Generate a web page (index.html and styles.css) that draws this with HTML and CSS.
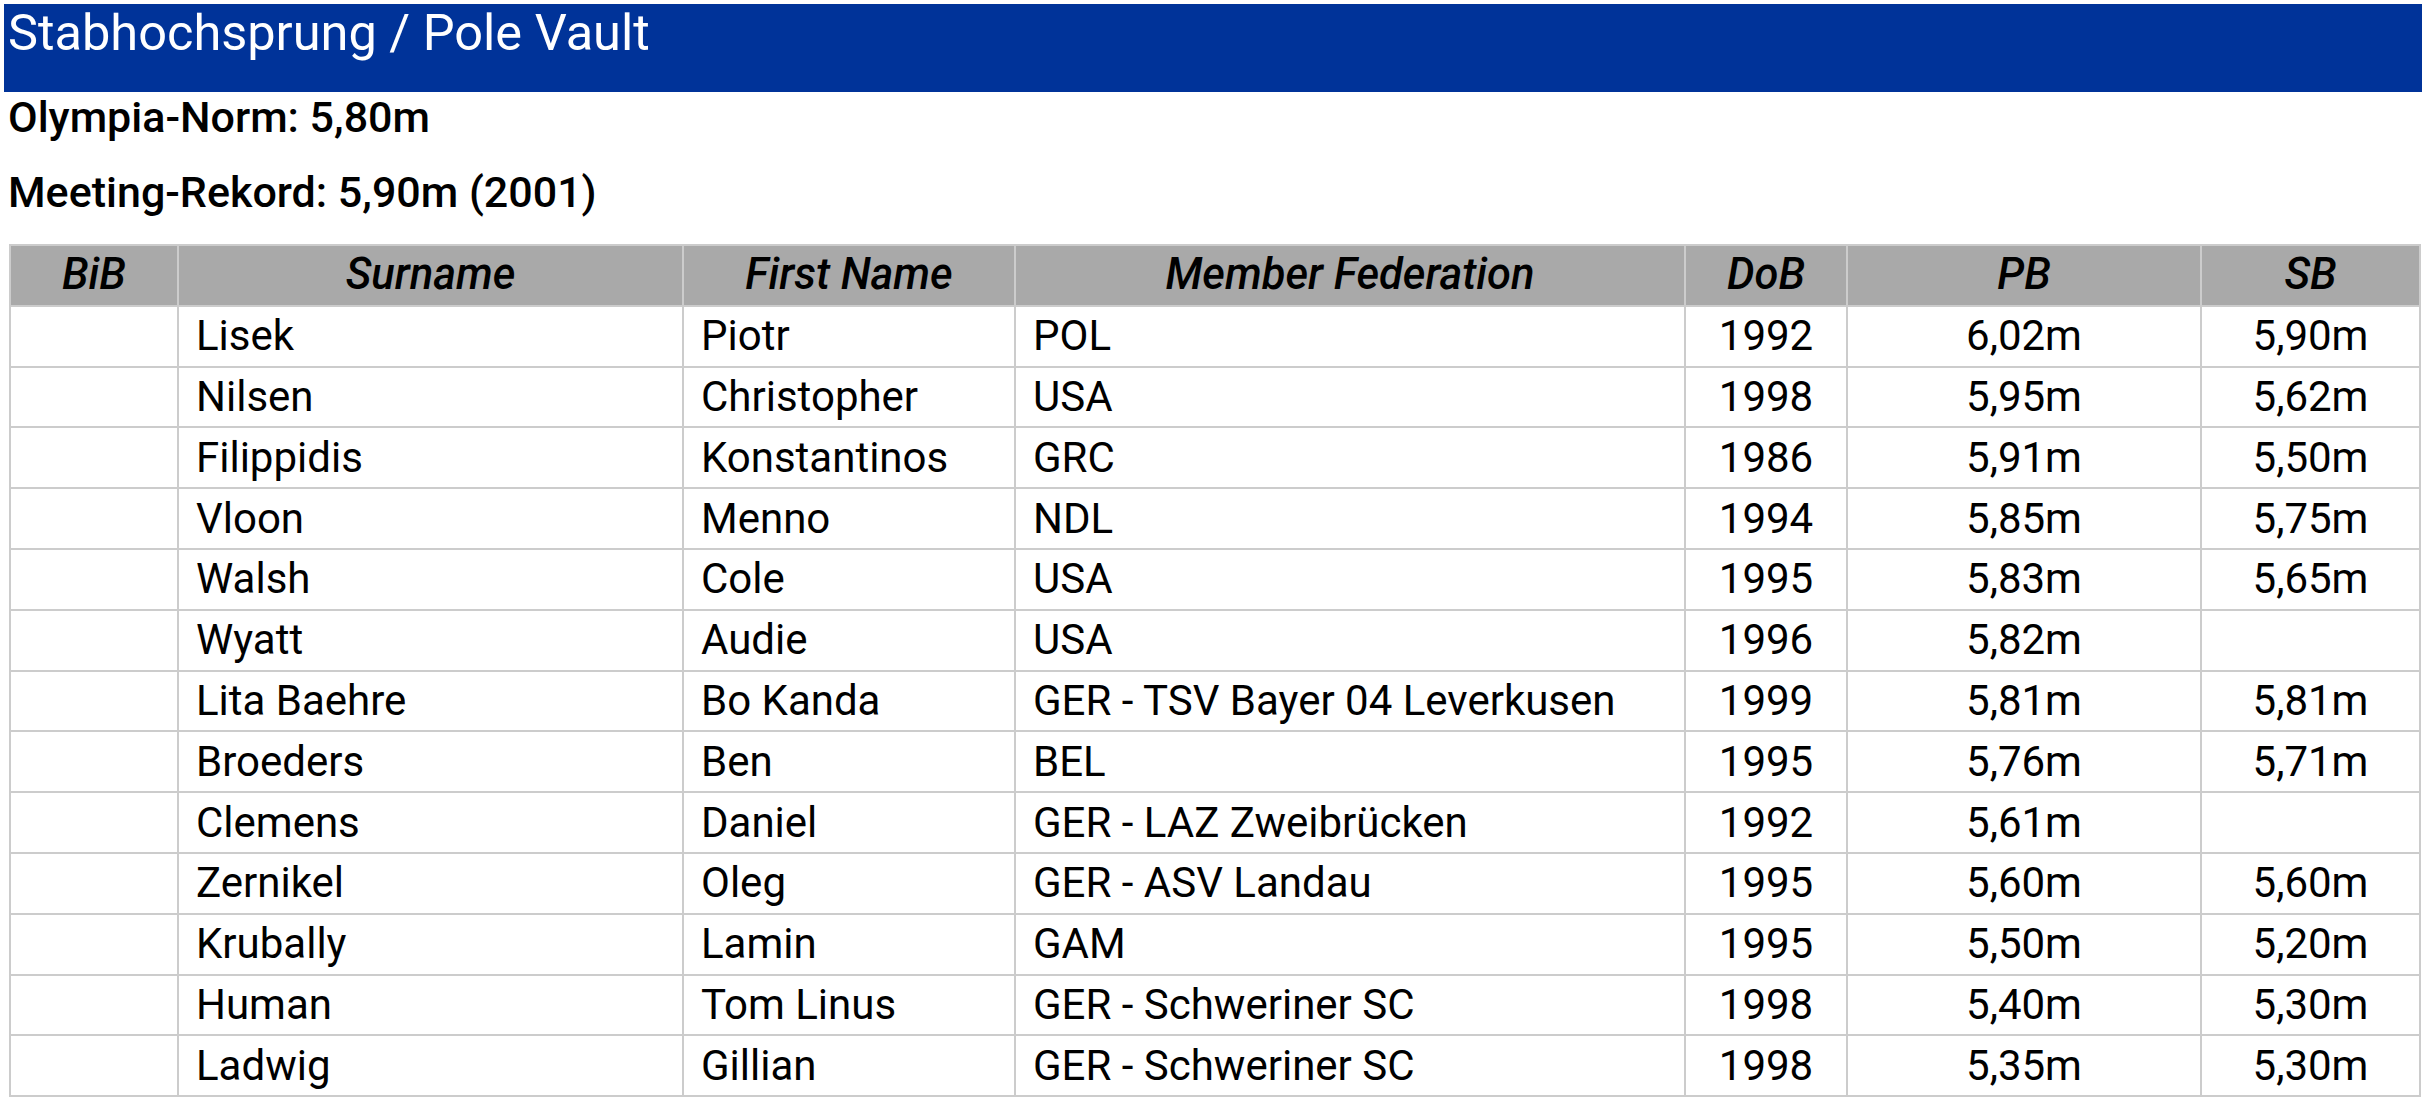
FILE: index.html
```html
<!DOCTYPE html>
<html lang="de">
<head>
<meta charset="utf-8">
<title>Stabhochsprung / Pole Vault</title>
<link rel="stylesheet" href="styles.css">
</head>
<body>
<div class="page">
  <h1 class="event-title">Stabhochsprung / Pole Vault</h1>
  <p class="info info-first">Olympia-Norm: 5,80m</p>
  <p class="info">Meeting-Rekord: 5,90m (2001)</p>
  <table class="entries">
    <colgroup>
      <col class="c-bib"><col class="c-sur"><col class="c-first"><col class="c-fed"><col class="c-dob"><col class="c-pb"><col class="c-sb">
    </colgroup>
    <thead>
      <tr><th>BiB</th><th>Surname</th><th>First Name</th><th>Member Federation</th><th>DoB</th><th>PB</th><th>SB</th></tr>
    </thead>
    <tbody>
      <tr><td></td><td>Lisek</td><td>Piotr</td><td>POL</td><td class="num">1992</td><td class="num">6,02m</td><td class="num">5,90m</td></tr>
      <tr><td></td><td>Nilsen</td><td>Christopher</td><td>USA</td><td class="num">1998</td><td class="num">5,95m</td><td class="num">5,62m</td></tr>
      <tr><td></td><td>Filippidis</td><td>Konstantinos</td><td>GRC</td><td class="num">1986</td><td class="num">5,91m</td><td class="num">5,50m</td></tr>
      <tr><td></td><td>Vloon</td><td>Menno</td><td>NDL</td><td class="num">1994</td><td class="num">5,85m</td><td class="num">5,75m</td></tr>
      <tr><td></td><td>Walsh</td><td>Cole</td><td>USA</td><td class="num">1995</td><td class="num">5,83m</td><td class="num">5,65m</td></tr>
      <tr><td></td><td>Wyatt</td><td>Audie</td><td>USA</td><td class="num">1996</td><td class="num">5,82m</td><td class="num"></td></tr>
      <tr><td></td><td>Lita Baehre</td><td>Bo Kanda</td><td>GER - TSV Bayer 04 Leverkusen</td><td class="num">1999</td><td class="num">5,81m</td><td class="num">5,81m</td></tr>
      <tr><td></td><td>Broeders</td><td>Ben</td><td>BEL</td><td class="num">1995</td><td class="num">5,76m</td><td class="num">5,71m</td></tr>
      <tr><td></td><td>Clemens</td><td>Daniel</td><td>GER - LAZ Zweibrücken</td><td class="num">1992</td><td class="num">5,61m</td><td class="num"></td></tr>
      <tr><td></td><td>Zernikel</td><td>Oleg</td><td>GER - ASV Landau</td><td class="num">1995</td><td class="num">5,60m</td><td class="num">5,60m</td></tr>
      <tr><td></td><td>Krubally</td><td>Lamin</td><td>GAM</td><td class="num">1995</td><td class="num">5,50m</td><td class="num">5,20m</td></tr>
      <tr><td></td><td>Human</td><td>Tom Linus</td><td>GER - Schweriner SC</td><td class="num">1998</td><td class="num">5,40m</td><td class="num">5,30m</td></tr>
      <tr><td></td><td>Ladwig</td><td>Gillian</td><td>GER - Schweriner SC</td><td class="num">1998</td><td class="num">5,35m</td><td class="num">5,30m</td></tr>
    </tbody>
  </table>
</div>
</body>
</html>
```
FILE: styles.css
```css
html, body {
  margin: 0;
  padding: 0;
  background: #ffffff;
}

body {
  font-family: Roboto, "Liberation Sans", Arial, sans-serif;
  color: #000000;
}

.page {
  padding: 4px;
}

.event-title {
  margin: 0 6px 0 0;
  height: 88px;
  padding: 0 0 0 4px;
  box-sizing: border-box;
  background: #003399;
  color: #ffffff;
  font-size: 50.5px;
  font-weight: 400;
  line-height: 58px;
}

.info {
  margin: 25px 0 0 4px;
  font-size: 43px;
  font-weight: 500;
  line-height: 50px;
}

.info-first {
  margin-top: 0;
}

.entries {
  margin: 27px 0 0 5px;
  width: 2410px;
  table-layout: fixed;
  border-collapse: collapse;
  font-size: 42px;
}

.c-bib { width: 168px; }
.c-sur { width: 505px; }
.c-first { width: 332px; }
.c-fed { width: 670px; }
.c-dob { width: 162px; }
.c-pb { width: 354px; }
.c-sb { width: 219px; }

.entries tr {
  height: 60.8px;
}

.entries th,
.entries td {
  border: 2px solid #cccccc;
  padding: 0 17px;
  vertical-align: middle;
  white-space: nowrap;
  line-height: 48px;
}

.entries th {
  background: #a9a9a9;
  font-size: 43.5px;
  font-style: italic;
  font-weight: 500;
  text-align: center;
}

.entries td {
  font-weight: 400;
  text-align: left;
}

.entries td.num {
  text-align: center;
}
```
